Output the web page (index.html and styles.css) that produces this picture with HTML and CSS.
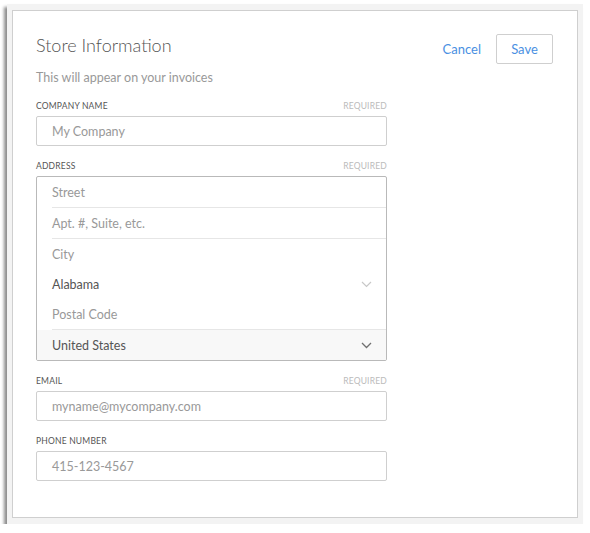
FILE: index.html
```html
<!DOCTYPE html>
<html>
<head>
<meta charset="utf-8">
<link rel="stylesheet" href="styles.css">
</head>
<body>
<div class="window">
  <div class="panel">
    <div class="header">
      <div class="intro">
        <h1 class="title">Store Information</h1>
        <p class="subtitle">This will appear on your invoices</p>
      </div>
      <div class="actions">
        <a class="cancel">Cancel</a>
        <button class="save">Save</button>
      </div>
    </div>
    <div class="form">
      <div class="field">
        <div class="label-row"><span class="label">Company Name</span><span class="req">Required</span></div>
        <div class="input">My Company</div>
      </div>
      <div class="field">
        <div class="label-row"><span class="label">Address</span><span class="req">Required</span></div>
        <div class="address">
          <div class="row divided">Street</div>
          <div class="row divided">Apt. #, Suite, etc.</div>
          <div class="row">City</div>
          <div class="row value select-light">Alabama
            <svg class="chev" width="11" height="7" viewBox="0 0 11 7"><path d="M1 1l4.5 4.5L10 1" fill="none" stroke="#c8c8c8" stroke-width="1.2"/></svg>
          </div>
          <div class="row divided">Postal Code</div>
          <div class="row value country">United States
            <svg class="chev" width="11" height="7" viewBox="0 0 11 7"><path d="M1 1l4.5 4.5L10 1" fill="none" stroke="#707070" stroke-width="1.3"/></svg>
          </div>
        </div>
      </div>
      <div class="field">
        <div class="label-row"><span class="label">Email</span><span class="req">Required</span></div>
        <div class="input">myname@mycompany.com</div>
      </div>
      <div class="field">
        <div class="label-row"><span class="label">Phone Number</span></div>
        <div class="input">415-123-4567</div>
      </div>
    </div>
  </div>
</div>
</body>
</html>
```

FILE: styles.css
```css
* { box-sizing: border-box; }
html, body { margin: 0; padding: 0; background: #ffffff; }
body {
  font-family: "Lato", "Open Sans", "Liberation Sans", sans-serif;
  color: #555;
}
.window {
  margin: 4px 0 0 7px;
  width: 576px;
  height: 520px;
  background: #f3f3f3;
  padding: 6px 5px;
  box-shadow: -3px 3px 3px rgba(0,0,0,0.45);
}
.panel {
  background: #fff;
  border: 1px solid #cfcfcf;
  height: 508px;
  padding: 23px 24px 0 23px;
}
.header {
  display: flex;
  justify-content: space-between;
  align-items: flex-start;
}
.title {
  margin: 0;
  font-size: 18px;
  line-height: 22px;
  font-weight: 300;
  color: #555;
}
.subtitle {
  margin: 14px 0 0;
  font-size: 12.5px;
  line-height: 16px;
  color: #999;
}
.actions {
  display: flex;
  align-items: center;
  gap: 15px;
}
.cancel {
  color: #4a90e2;
  font-size: 13px;
  cursor: pointer;
}
.save {
  width: 57px;
  height: 30px;
  border: 1px solid #cfcfcf;
  border-radius: 2px;
  background: #fff;
  color: #4a90e2;
  font-family: inherit;
  font-size: 13px;
  padding: 0;
}
.form {
  width: 351px;
  margin-top: 14px;
  display: flex;
  flex-direction: column;
  gap: 14px;
}
.label-row {
  display: flex;
  justify-content: space-between;
  font-size: 8.5px;
  line-height: 12px;
  text-transform: uppercase;
  letter-spacing: 0.2px;
  margin-bottom: 4px;
}
.label { color: #555; }
.req { color: #bbb; }
.input {
  height: 30px;
  border: 1px solid #cfcfcf;
  border-radius: 2px;
  padding: 0 15px;
  display: flex;
  align-items: center;
  font-size: 12.5px;
  color: #999;
}
.address {
  border: 1px solid #b9b9b9;
  border-radius: 2px;
  overflow: hidden;
}
.row {
  height: 30px;
  margin-left: 15px;
  display: flex;
  align-items: center;
  justify-content: space-between;
  font-size: 12.5px;
  color: #999;
  padding-right: 14px;
}
.row.divided {
  height: 31px;
  border-bottom: 1px solid #e6e6e6;
}
.row.value { color: #555; }
.row.country {
  margin-left: 0;
  padding-left: 15px;
  background: #f8f8f8;
}
.chev { display: block; }
```
